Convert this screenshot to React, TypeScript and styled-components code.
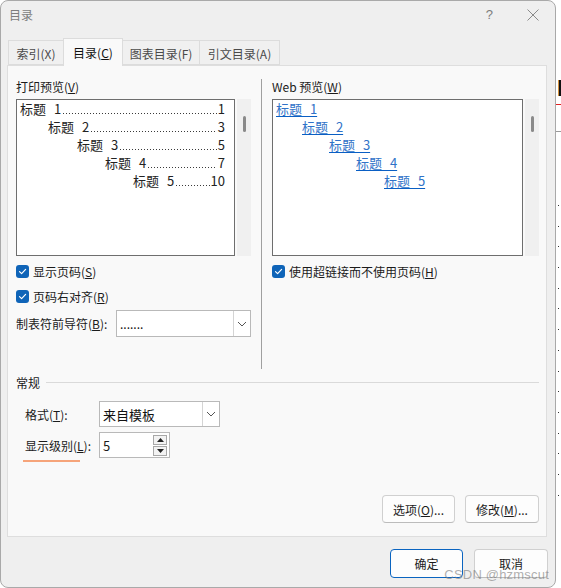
import React from 'react';
import styled, { createGlobalStyle } from 'styled-components';

const GlobalStyle = createGlobalStyle`
    html, body {
        margin: 0;
        padding: 0;
        background: #ffffff;
    }
    body {
        font-family: "Noto Sans CJK SC", "Noto Sans", sans-serif;
        font-size: 12px;
        color: #1b1b1b;
    }
    * {
        box-sizing: border-box;
    }
`;

const printRows = [
    { num: '1', page: '1', indent: 3 },
    { num: '2', page: '3', indent: 31 },
    { num: '3', page: '5', indent: 60 },
    { num: '4', page: '7', indent: 88 },
    { num: '5', page: '10', indent: 116 },
];

const webRows = [
    { num: '1', indent: 3 },
    { num: '2', indent: 29 },
    { num: '3', indent: 56 },
    { num: '4', indent: 83 },
    { num: '5', indent: 111 },
];

const docDots = [0, 1, 2, 3, 4, 5, 6, 7, 8, 9, 10, 11, 12, 13, 14];

const Check = () => (
    <CheckBox>
        <svg width="9" height="9" viewBox="0 0 9 9">
            <path d="M1.5 4.6 L3.6 6.6 L7.6 2.4" fill="none" stroke="#ffffff" strokeWidth="1.2" strokeLinecap="round" strokeLinejoin="round" />
        </svg>
    </CheckBox>
);

const Chevron = () => (
    <svg width="10" height="6" viewBox="0 0 10 6">
        <path d="M1 1 L5 5 L9 1" fill="none" stroke="#555555" strokeWidth="1" />
    </svg>
);

const App: React.FC = () => {
    return (
        <Page>
            <GlobalStyle />
            <Dialog>
                <TitleBar>
                    <WindowTitle>目录</WindowTitle>
                    <TitleSpacer />
                    <HelpMark>?</HelpMark>
                    <CloseMark>
                        <svg width="12" height="12" viewBox="0 0 12 12">
                            <path d="M0.5 0.5 L11.5 11.5 M11.5 0.5 L0.5 11.5" stroke="#8a8a8a" strokeWidth="1" />
                        </svg>
                    </CloseMark>
                </TitleBar>

                <TabStrip>
                    <Tab w={56}>索引(X)</Tab>
                    <Tab w={60} active>目录(<u>C</u>)</Tab>
                    <Tab w={78}>图表目录(F)</Tab>
                    <Tab w={81}>引文目录(A)</Tab>
                </TabStrip>

                <Panel>
                    <TopGrid>
                        <Column>
                            <SectionLabel>打印预览(<u>V</u>)</SectionLabel>
                            <PreviewRow>
                                <PreviewBox w={219}>
                                    {printRows.map((r) => (
                                        <PrintLine key={r.num} indent={r.indent}>
                                            <Heading>{`标题 ${r.num}`}</Heading>
                                            <Leader />
                                            <span>{r.page}</span>
                                        </PrintLine>
                                    ))}
                                </PreviewBox>
                                <ScrollTrack>
                                    <ScrollThumb />
                                </ScrollTrack>
                            </PreviewRow>
                            <CheckRow>
                                <Check />
                                <span>显示页码(<u>S</u>)</span>
                            </CheckRow>
                            <CheckRow gap={12}>
                                <Check />
                                <span>页码右对齐(<u>R</u>)</span>
                            </CheckRow>
                            <LeaderField>
                                <span>制表符前导符(<u>B</u>):</span>
                                <Select w={135}>
                                    <SelectValue>.......</SelectValue>
                                    <DropButton>
                                        <Chevron />
                                    </DropButton>
                                </Select>
                            </LeaderField>
                        </Column>

                        <Separator />

                        <Column>
                            <SectionLabel>Web 预览(<u>W</u>)</SectionLabel>
                            <PreviewRow>
                                <PreviewBox w={251}>
                                    {webRows.map((r) => (
                                        <WebLine key={r.num} indent={r.indent}>
                                            <WebLink>{`标题 ${r.num}`}</WebLink>
                                        </WebLine>
                                    ))}
                                </PreviewBox>
                                <ScrollTrack>
                                    <ScrollThumb />
                                </ScrollTrack>
                            </PreviewRow>
                            <CheckRow>
                                <Check />
                                <span>使用超链接而不使用页码(<u>H</u>)</span>
                            </CheckRow>
                        </Column>
                    </TopGrid>

                    <GroupHeader>
                        <span>常规</span>
                        <GroupLine />
                    </GroupHeader>

                    <FieldRow top={12}>
                        <FieldLabel>格式(<u>T</u>):</FieldLabel>
                        <Select w={121} h={26}>
                            <SelectValue big>来自模板</SelectValue>
                            <DropButton>
                                <Chevron />
                            </DropButton>
                        </Select>
                    </FieldRow>
                    <FieldRow top={5}>
                        <FieldLabel>
                            <Marked>显示级别</Marked>(<u>L</u>):
                        </FieldLabel>
                        <Spin>
                            <SpinValue>5</SpinValue>
                            <SpinButtons>
                                <SpinButton>
                                    <svg width="7" height="4" viewBox="0 0 7 4"><path d="M0 4 L3.5 0 L7 4 Z" fill="#222" /></svg>
                                </SpinButton>
                                <SpinButton>
                                    <svg width="7" height="4" viewBox="0 0 7 4"><path d="M0 0 L3.5 4 L7 0 Z" fill="#222" /></svg>
                                </SpinButton>
                            </SpinButtons>
                        </Spin>
                    </FieldRow>

                    <Grow />

                    <ButtonRow gap={10}>
                        <Btn w={73}>选项(<u>O</u>)...</Btn>
                        <Btn w={74}>修改(<u>M</u>)...</Btn>
                    </ButtonRow>
                </Panel>

                <Footer>
                    <Btn w={73} h={29} primary>确定</Btn>
                    <Btn w={74} h={29}>取消</Btn>
                </Footer>

                <Watermark>CSDN @hzmscut</Watermark>
            </Dialog>

            <DocStrip>
                <DocWord>lo</DocWord>
                <Squiggle>
                    <svg width="8" height="3" viewBox="0 0 8 3">
                        <path d="M0 2 L1 1 L2 2 L3 1 L4 2 L5 1 L6 2 L7 1 L8 2" fill="none" stroke="#e02020" strokeWidth="1" />
                    </svg>
                </Squiggle>
                <DocRule />
                <DotList>
                    {docDots.map((d) => (
                        <DocDots key={d} />
                    ))}
                </DotList>
            </DocStrip>
        </Page>
    );
};

export default App;

const Page = styled.div`
    display: flex;
    flex-direction: row;
    width: 561px;
    height: 588px;
    overflow: hidden;
    background: #ffffff;
`;

const Dialog = styled.div`
    position: relative;
    display: flex;
    flex-direction: column;
    width: 556px;
    height: 588px;
    flex-shrink: 0;
    background: #efefef;
    border: 1px solid #a9a9a9;
    border-radius: 8px;
`;

const TitleBar = styled.div`
    display: flex;
    flex-direction: row;
    align-items: center;
    height: 27px;
    padding: 0 16px 0 8px;
    color: #7d7d7d;
    font-size: 12px;
`;

const WindowTitle = styled.div`
    font-size: 12px;
`;

const TitleSpacer = styled.div`
    flex: 1;
`;

const HelpMark = styled.div`
    font-family: "Liberation Sans", sans-serif;
    font-size: 13px;
    color: #7d7d7d;
    margin-right: 34px;
`;

const CloseMark = styled.div`
    display: flex;
    align-items: center;
`;

const TabStrip = styled.div`
    display: flex;
    flex-direction: row;
    align-items: flex-end;
    height: 38px;
    padding-left: 7px;
    margin-bottom: -1px;
    position: relative;
    z-index: 1;
`;

const Tab = styled.div<{ w: number; active?: boolean }>`
    display: flex;
    align-items: center;
    justify-content: center;
    width: ${p => p.w}px;
    height: ${p => (p.active ? 28 : 25)}px;
    margin-bottom: ${p => (p.active ? 0 : 1)}px;
    background: ${p => (p.active ? '#f9f9f9' : '#f0f0f0')};
    border: 1px solid #dcdcdc;
    border-bottom: ${p => (p.active ? 'none' : '1px solid #dcdcdc')};
    margin-right: -1px;
    color: ${p => (p.active ? '#111' : '#4a4a4a')};
    font-size: 12px;
    padding-top: ${p => (p.active ? 0 : 1)}px;
`;

const Panel = styled.div`
    display: flex;
    flex-direction: column;
    height: 472px;
    margin: 0 8px 0 6px;
    padding: 13px 7px 13px 8px;
    background: #f9f9f9;
    border: 1px solid #dedede;
`;

const TopGrid = styled.div`
    display: grid;
    grid-template-columns: 235px 1px 267px;
    column-gap: 10px;
    height: 290px;
`;

const Column = styled.div`
    display: flex;
    flex-direction: column;
`;

const Separator = styled.div`
    background: #a0a0a0;
`;

const SectionLabel = styled.div`
    height: 16px;
    line-height: 16px;
    margin-bottom: 4px;
    font-size: 12px;
`;

const PreviewRow = styled.div`
    display: flex;
    flex-direction: row;
    gap: 2px;
    height: 157px;
`;

const PreviewBox = styled.div<{ w: number }>`
    width: ${p => p.w}px;
    height: 157px;
    background: #ffffff;
    border: 1px solid #6e6e6e;
    overflow: hidden;
`;

const PrintLine = styled.div<{ indent: number }>`
    display: flex;
    flex-direction: row;
    height: 18px;
    line-height: 18px;
    padding-left: ${p => p.indent}px;
    padding-right: 9px;
    font-size: 13px;
    color: #222;
    white-space: nowrap;
`;

const Heading = styled.span`
    word-spacing: 5px;
`;

const Leader = styled.span`
    flex: 1;
    min-width: 0;
    margin: 0 1px;
    background-image: linear-gradient(to right, #3a3a3a 1px, transparent 1px);
    background-size: 3px 1px;
    background-repeat: repeat-x;
    background-position: 1px 13px;
`;

const WebLine = styled.div<{ indent: number }>`
    height: 18px;
    line-height: 18px;
    padding-left: ${p => p.indent}px;
    font-size: 13px;
    white-space: pre;
`;

const WebLink = styled.span`
    color: #3073c8;
    word-spacing: 5px;
    text-decoration: underline;
    text-decoration-color: #0a5fc4;
    text-underline-offset: 2px;
`;

const ScrollTrack = styled.div`
    width: 14px;
    height: 157px;
    background: #f0f0f0;
    display: flex;
    justify-content: center;
    padding-top: 17px;
`;

const ScrollThumb = styled.div`
    width: 3px;
    height: 16px;
    border-radius: 2px;
    background: #8a8a8a;
`;

const CheckRow = styled.div<{ gap?: number }>`
    display: flex;
    flex-direction: row;
    align-items: center;
    gap: 4px;
    height: 13px;
    margin-top: ${p => p.gap ?? 9}px;
    font-size: 12px;
`;

const CheckBox = styled.span`
    display: flex;
    align-items: center;
    justify-content: center;
    width: 13px;
    height: 13px;
    border-radius: 3px;
    background: #0f64b8;
`;

const LeaderField = styled.div`
    display: flex;
    flex-direction: row;
    align-items: center;
    justify-content: space-between;
    margin-top: 7px;
    height: 27px;
    font-size: 12px;
`;

const Select = styled.div<{ w: number; h?: number }>`
    display: flex;
    flex-direction: row;
    width: ${p => p.w}px;
    height: ${p => p.h ?? 27}px;
    background: #ffffff;
    border: 1px solid #b9b9b9;
`;

const SelectValue = styled.div<{ big?: boolean }>`
    flex: 1;
    display: flex;
    align-items: center;
    padding-left: 3px;
    font-size: ${p => (p.big ? 13 : 12)}px;
    color: #111;
`;

const DropButton = styled.div`
    display: flex;
    align-items: center;
    justify-content: center;
    width: 17px;
    border-left: 1px solid #d4d4d4;
    background: #ffffff;
`;

const GroupHeader = styled.div`
    display: flex;
    flex-direction: row;
    align-items: center;
    gap: 6px;
    height: 14px;
    margin-top: 6px;
    font-size: 12px;
`;

const GroupLine = styled.div`
    flex: 1;
    height: 1px;
    background: #dadada;
`;

const FieldRow = styled.div<{ top: number }>`
    display: flex;
    flex-direction: row;
    align-items: center;
    height: 26px;
    margin-top: ${p => p.top}px;
    padding-left: 9px;
    font-size: 12px;
`;

const FieldLabel = styled.div`
    width: 74px;
`;

const Marked = styled.span`
    position: relative;
    &::after {
        content: '';
        position: absolute;
        left: -2px;
        right: -7px;
        bottom: -8px;
        height: 2px;
        background: #f6a47a;
    }
`;

const Spin = styled.div`
    display: flex;
    flex-direction: row;
    width: 71px;
    height: 26px;
    background: #ffffff;
    border: 1px solid #b9b9b9;
`;

const SpinValue = styled.div`
    flex: 1;
    display: flex;
    align-items: center;
    padding-left: 3px;
    font-size: 13px;
`;

const SpinButtons = styled.div`
    display: flex;
    flex-direction: column;
    justify-content: center;
    gap: 1px;
    padding-right: 2px;
`;

const SpinButton = styled.div`
    display: flex;
    align-items: center;
    justify-content: center;
    width: 14px;
    height: 10px;
    background: #f3f3f3;
    border: 1px solid #a8a8a8;
`;

const Grow = styled.div`
    flex: 1;
`;

const ButtonRow = styled.div<{ gap: number }>`
    display: flex;
    flex-direction: row;
    justify-content: flex-end;
    gap: ${p => p.gap}px;
`;

const Btn = styled.button<{ w: number; h?: number; primary?: boolean }>`
    all: unset;
    box-sizing: border-box;
    display: flex;
    align-items: center;
    justify-content: center;
    width: ${p => p.w}px;
    height: ${p => p.h ?? 28}px;
    border-radius: 4px;
    background: #fdfdfd;
    border: 1px solid ${p => (p.primary ? '#0a64c0' : '#d0d0d0')};
    border-bottom-color: ${p => (p.primary ? '#0a64c0' : '#bcbcbc')};
    font-family: "Noto Sans CJK SC", "Noto Sans", sans-serif;
    font-size: 12px;
    color: #1b1b1b;
`;

const Footer = styled.div`
    display: flex;
    flex-direction: row;
    justify-content: flex-end;
    gap: 11px;
    padding: 12px 7px 0 0;
`;

const Watermark = styled.div`
    position: absolute;
    right: 6px;
    bottom: 5px;
    font-family: "Liberation Sans", "Noto Sans", sans-serif;
    font-size: 13px;
    color: rgba(120, 120, 120, 0.6);
    letter-spacing: 0.2px;
`;

const DocStrip = styled.div`
    display: flex;
    flex-direction: column;
    flex: 1;
    overflow: hidden;
    background: #ffffff;
`;

const DocWord = styled.div`
    margin-top: 78px;
    margin-left: 1px;
    height: 22px;
    line-height: 22px;
    font-family: "Liberation Sans", sans-serif;
    font-weight: bold;
    font-size: 22px;
    color: #111;
    white-space: nowrap;
`;

const Squiggle = styled.div`
    height: 3px;
    margin-top: 1px;
    line-height: 0;
`;

const DocRule = styled.div`
    height: 1px;
    margin-top: 27px;
    background: #9a9a9a;
`;

const DotList = styled.div`
    display: flex;
    flex-direction: column;
    margin-top: 73px;
`;

const DocDots = styled.div`
    height: 20.7px;
    width: 5px;
    margin-left: 1px;
    background-image: linear-gradient(to right, #333 1px, transparent 1px);
    background-size: 3px 1px;
    background-repeat: repeat-x;
    background-position: 1px 0;
`;
